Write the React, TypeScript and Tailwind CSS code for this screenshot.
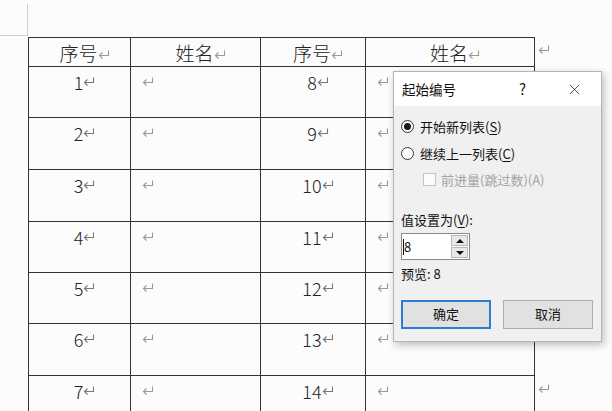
import { X } from 'lucide-react'

const rowHeights = [51, 52, 52, 51, 51, 52, 52]

function Mark({ className = 'text-[#8a8a8a]' }: { className?: string }) {
  return (
    <svg width="12" height="9" viewBox="0 0 12 9" className={`block shrink-0 ${className}`} fill="none" stroke="currentColor" strokeWidth="1.1">
      <path d="M10.5 0.5V5.5H1.5M4.5 2.5L1.5 5.5L4.5 8.5" />
    </svg>
  )
}

function NumCell({ n, width }: { n: number; width: string }) {
  return (
    <div className={`${width} flex items-start justify-center border-r border-[#333] pt-[6px] pl-[10px]`}>
      <span className="text-[18px] font-light leading-[18px] text-[#222]">{n}</span>
      <Mark className="mt-[4px] text-[#777]" />
    </div>
  )
}

function NameCell({ width }: { width: string }) {
  return (
    <div className={`${width} flex items-start border-r border-[#333] pt-[10px] pl-[11px]`}>
      <Mark className="text-[#999]" />
    </div>
  )
}

function HeaderCell({ label, width }: { label: string; width: string }) {
  return (
    <div className={`${width} flex items-center justify-center border-r border-[#333] pl-[10px]`}>
      <span className="text-[19px] font-light leading-[19px] text-[#222]">{label}</span>
      <Mark className="mt-[4px] text-[#999]" />
    </div>
  )
}

function Radio({ checked }: { checked?: boolean }) {
  return (
    <span className="flex h-[13px] w-[13px] items-center justify-center rounded-full border border-[#333] bg-white">
      {checked && <span className="h-[7px] w-[7px] rounded-full bg-[#1a1a1a]" />}
    </span>
  )
}

function StartNumberDialog() {
  return (
    <div className="absolute left-[393px] top-[71px] flex h-[271px] w-[209px] flex-col border border-[#b5b5b5] bg-[#f0f0f0] shadow-[2px_3px_8px_rgba(0,0,0,0.25)]">
      {/* Title bar */}
      <div className="flex h-[34px] items-center bg-white pl-[8px] pr-[18px]">
        <span className="text-[13.5px] text-[#111]">起始编号</span>
        <span className="ml-auto mr-[40px] text-[15px] text-[#222]">?</span>
        <X size={17} strokeWidth={1.1} className="text-[#222]" />
      </div>

      <div className="flex flex-col px-[7px] pt-[11px] text-[13px] text-[#111]">
        <div className="flex items-center gap-[6px]">
          <Radio checked />
          <span>开始新列表(<span className="underline underline-offset-2">S</span>)</span>
        </div>
        <div className="mt-[7px] flex items-center gap-[6px]">
          <Radio />
          <span>继续上一列表(<span className="underline underline-offset-2">C</span>)</span>
        </div>
        <div className="mt-[7px] flex items-center gap-[5px] pl-[22px] text-[#a3a3a3]">
          <span className="h-[13px] w-[13px] border border-[#c4c4c4] bg-[#fbfbfb]" />
          <span>前进量(跳过数)(A)</span>
        </div>

        <div className="mt-[20px]">值设置为(<span className="underline underline-offset-2">V</span>):</div>
        <div className="mt-[4px] flex h-[27px] w-[69px] border border-[#8a8a8a] bg-white">
          <div className="flex flex-1 items-center pl-[1px]">
            <span className="h-[16px] w-px bg-[#111]" />
            <span className="text-[13px]">8</span>
          </div>
          <div className="my-[1px] mr-[1px] flex w-[17px] flex-col gap-px">
            <div className="flex flex-1 items-center justify-center border border-[#b8b8b8] bg-[#e8e8e8]">
              <span className="h-0 w-0 border-x-[4px] border-b-[4px] border-x-transparent border-b-[#111]" />
            </div>
            <div className="flex flex-1 items-center justify-center border border-[#b8b8b8] bg-[#e8e8e8]">
              <span className="h-0 w-0 border-x-[4px] border-t-[4px] border-x-transparent border-t-[#111]" />
            </div>
          </div>
        </div>
        <div className="mt-[4px]">预览: 8</div>

        <div className="mt-[16px] flex gap-[12px]">
          <button className="h-[29px] w-[90px] border-2 border-[#2b7cd3] bg-[#e1e1e1] text-[13px] text-[#111]">确定</button>
          <button className="h-[29px] w-[90px] border border-[#adadad] bg-[#e1e1e1] text-[13px] text-[#111]">取消</button>
        </div>
      </div>
    </div>
  )
}

export default function App() {
  const widths = ['w-[102px]', 'w-[130px]', 'w-[105px]', 'w-[169px]']

  return (
    <div
      className="relative h-[411px] w-[612px] overflow-hidden bg-[#fcfcfc]"
      style={{ fontFamily: '"Noto Sans CJK SC", "Noto Sans", sans-serif' }}
    >
      {/* page corner crop mark */}
      <div className="absolute left-0 top-[4px] h-[32px] w-[28px] border-b border-r border-[#cfcfcf]" />

      <div className="flex pl-[28px] pt-[37px]">
        <div className="flex flex-col border-l border-t border-[#333]">
          <div className="flex h-[29px] border-b border-[#333]">
            <HeaderCell label="序号" width={widths[0]} />
            <HeaderCell label="姓名" width={widths[1]} />
            <HeaderCell label="序号" width={widths[2]} />
            <HeaderCell label="姓名" width={widths[3]} />
          </div>
          {rowHeights.map((h, i) => (
            <div key={i} className="flex border-b border-[#333]" style={{ height: h }}>
              <NumCell n={i + 1} width={widths[0]} />
              <NameCell width={widths[1]} />
              <NumCell n={i + 8} width={widths[2]} />
              <NameCell width={widths[3]} />
            </div>
          ))}
        </div>

        {/* end-of-row marks */}
        <div className="flex flex-col pl-[3px] pt-[8px]">
          <div className="h-[29px]">
            <Mark className="text-[#999]" />
          </div>
          {rowHeights.map((h, i) => (
            <div key={i} style={{ height: h }} className="pt-[1px]">
              <Mark className="text-[#999]" />
            </div>
          ))}
        </div>
      </div>

      <StartNumberDialog />
    </div>
  )
}
